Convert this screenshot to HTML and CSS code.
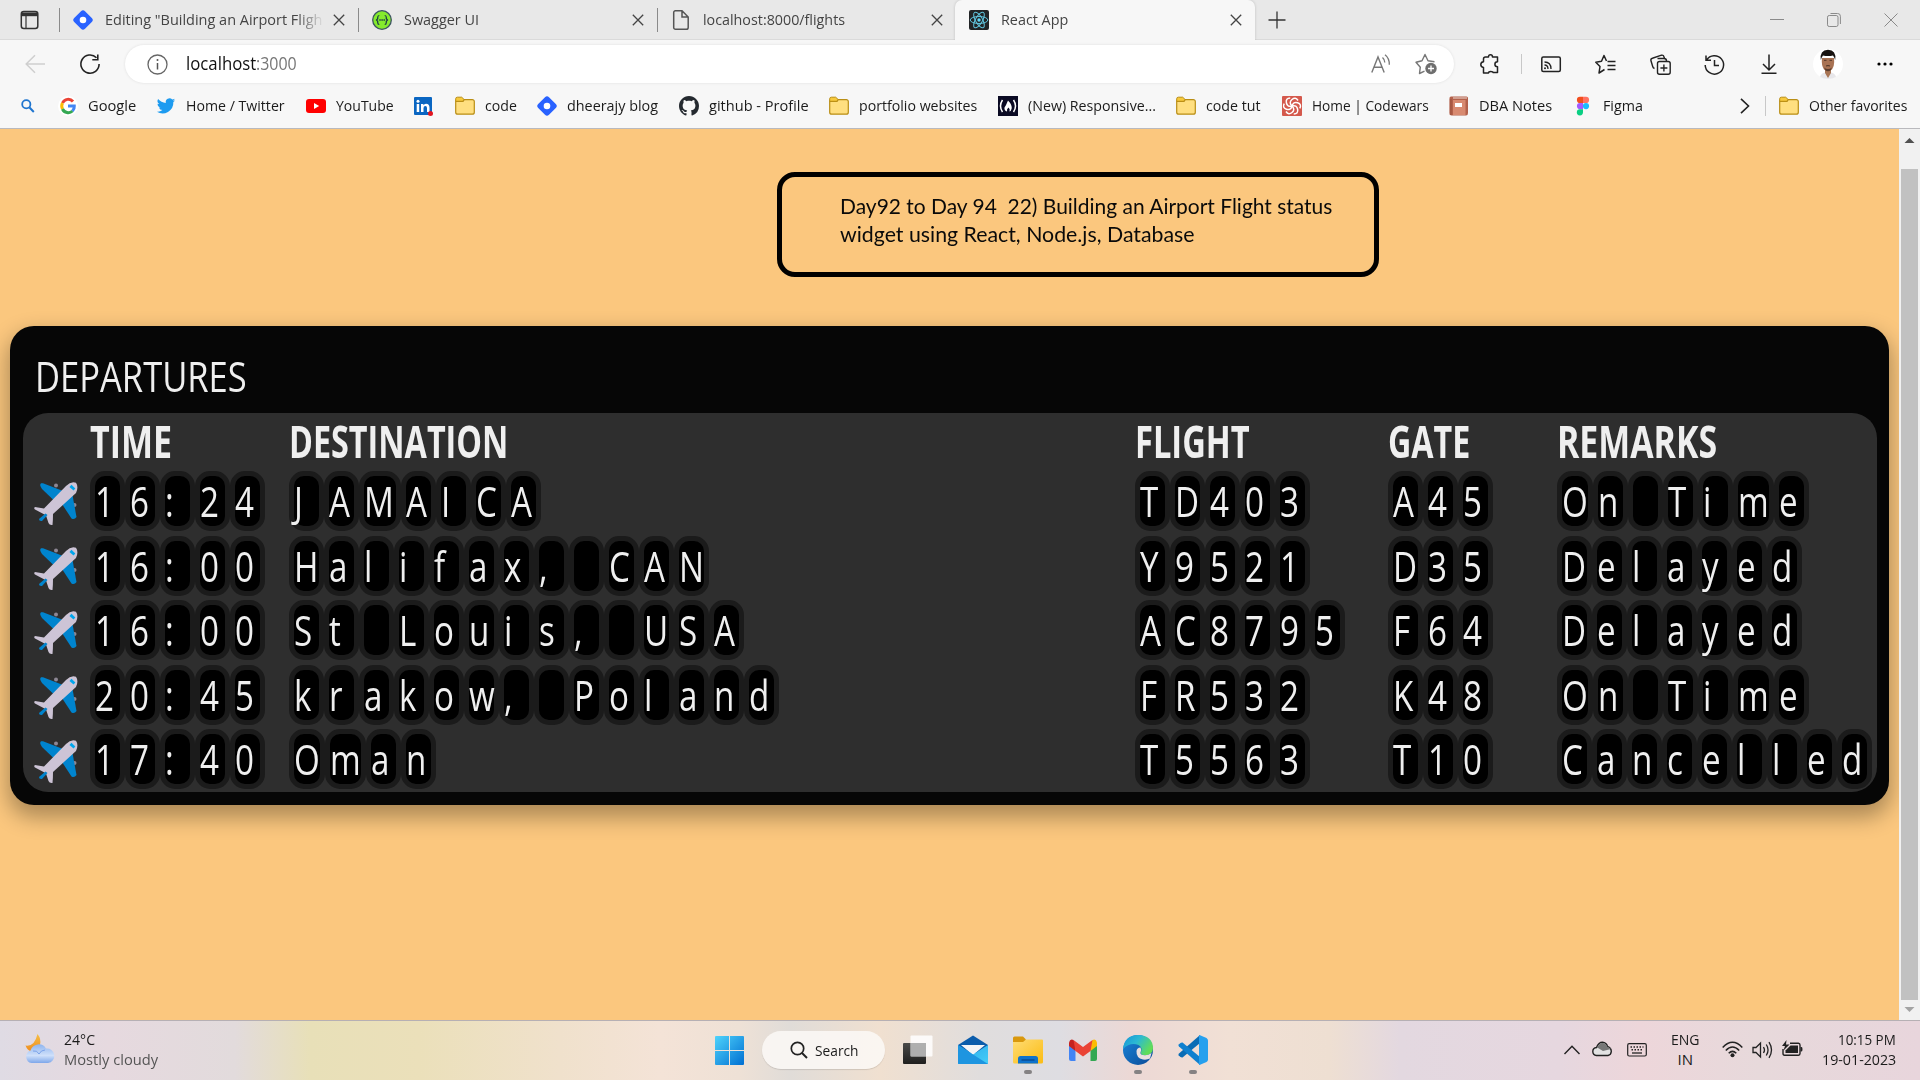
FILE: index.html
```html
<!DOCTYPE html>
<html lang="en">
<head>
<meta charset="utf-8">
<title>React App</title>
<link rel="stylesheet" href="styles.css">
</head>
<body>
<svg width="0" height="0" class="defs">
  <defs>
    <linearGradient id="gWin" x1="0" y1="0" x2="1" y2="1"><stop offset="0" stop-color="#4fd3fb"/><stop offset="1" stop-color="#006fd2"/></linearGradient>
    <linearGradient id="gFold" x1="0" y1="0" x2="1" y2="1"><stop offset="0" stop-color="#ffdc74"/><stop offset="1" stop-color="#fbbc13"/></linearGradient>
    <linearGradient id="gMail" x1="0" y1="0" x2="1" y2="1"><stop offset="0" stop-color="#2ba9ea"/><stop offset="1" stop-color="#45cdf8"/></linearGradient>
    <linearGradient id="gEdge" x1="0" y1="0" x2="1" y2="0.5"><stop offset="0" stop-color="#1593d8"/><stop offset=".5" stop-color="#2cb9d3"/><stop offset="1" stop-color="#62dd58"/></linearGradient>
    <linearGradient id="gEdge2" x1="0" y1="0" x2="1" y2="1"><stop offset="0" stop-color="#1a86dc"/><stop offset="1" stop-color="#0c4a96"/></linearGradient>
    <linearGradient id="gMoon" x1="0" y1="0" x2="0" y2="1"><stop offset="0" stop-color="#f5bf45"/><stop offset="1" stop-color="#ee8a1e"/></linearGradient>
    <linearGradient id="gCloud" x1="0" y1="0" x2="0" y2="1"><stop offset="0" stop-color="#8fb5ee"/><stop offset=".6" stop-color="#cfe0fa"/><stop offset="1" stop-color="#7ea7ea"/></linearGradient>
    <linearGradient id="gDark" x1="0" y1="0" x2="0" y2="1"><stop offset="0" stop-color="#4a4a48"/><stop offset="1" stop-color="#1f1f1e"/></linearGradient>
    <symbol id="folder" viewBox="0 0 20 20"><path d="M.7 4.5V16.2a2 2 0 0 0 2 2H17.3a2 2 0 0 0 2-2V5.6a2 2 0 0 0-2-2H9.3L8 5.3H.7Z" fill="#ffdf80" stroke="#b98e15" stroke-width="1.2"/><path d="M.7 5.3V2.8A1.6 1.6 0 0 1 2.3 1.2H6.7L9 3.4 7.8 5.3Z" fill="#f7c93c" stroke="#b98e15" stroke-width="1"/></symbol>
    <symbol id="diamond" viewBox="0 0 20 20"><path d="M8 1.2Q10-.8 12 1.2L18.8 8Q20.800 10 18.8 12L12 18.800Q10 20.800 8 18.800L1.2 12Q-.8 10 1.2 8Z" fill="#2962ff"/><circle cx="10" cy="10" r="3.3" fill="#fff"/></symbol>
    <symbol id="x" viewBox="0 0 12 12"><path d="M.8.8 11.2 11.2M11.200.8.8 11.2" stroke="#444" stroke-width="1.3" fill="none"/></symbol>
    <symbol id="plane" viewBox="0 0 44 44"><circle cx="22" cy="3.500" r="2" fill="#8d8794"/><circle cx="40.500" cy="23" r="2" fill="#8d8794"/><path d="M7 1.300 9 1.200 29 9 20 18.500 8 7Q5 3 7 1.300Z" fill="#0084ce"/><path d="M38.500 13 42.500 35Q40.500 38 37.500 36.500L28 22Z" fill="#0084ce"/><path d="M32 4Q37-1 42 .8 44.800 5 42 11L19 32Q19 38 18.500 43 15.500 43.500 14.500 41L12 33.500 9.500 32 1 27.500Q-.5 26 1 25L10 26.500Z" fill="#cdc4d6"/><path d="M35.500 5 37.500 2.800 41.300 6.500 39.500 8.500Z" fill="#00a6ed"/><path d="M11.500 31.500 13.500 33 8 39Q5 39.500 5 37Z" fill="#0084ce"/></symbol>
  </defs>
</svg>

<header class="browser">
  <div class="tabs">
    <svg class="tabmenu" viewBox="0 0 20 20" width="20" height="20"><rect x="1.300" y="1.500" width="16.500" height="17" rx="2.500" fill="none" stroke="#333" stroke-width="1.500"/><path d="M1 2.500h17v3.700H1z" fill="#333"/><path d="M6 6v12" stroke="#333" stroke-width="1.200"/></svg>
    <div class="tab"><svg width="20" height="20"><use href="#diamond"/></svg><span class="txt fade" data-w="217">Editing "Building an Airport Fligh</span><svg class="close" width="12" height="12"><use href="#x"/></svg></div>
    <div class="tab"><svg width="20" height="20" viewBox="0 0 20 20"><circle cx="10" cy="10" r="9.300" fill="#85ea2d" stroke="#3c5361" stroke-width="1.300"/><path d="M7.300 5.500q-1.600 0-1.600 2v1.200L4.500 10l1.200 1.300v1.200q0 2 1.600 2M12.700 5.500q1.600 0 1.600 2v1.200l1.200 1.300-1.200 1.300v1.200q0 2-1.600 2" fill="none" stroke="#173647" stroke-width="1.200"/><path d="M7.300 10h5.600" stroke="#173647" stroke-width="1.400" stroke-dasharray="1.400 .7"/></svg><span class="txt" data-w="75">Swagger UI</span><svg class="close" width="12" height="12"><use href="#x"/></svg></div>
    <div class="tab"><svg width="20" height="20" viewBox="0 0 20 20"><path d="M3.800.8H11L17.200 7V17.500a1.800 1.800 0 0 1-1.800 1.800H4.500a1.800 1.800 0 0 1-1.800-1.800V2.500A1.700 1.700 0 0 1 4.500.8ZM11 1v6h6" fill="none" stroke="#555" stroke-width="1.500"/></svg><span class="txt" data-w="142">localhost:8000/flights</span><svg class="close" width="12" height="12"><use href="#x"/></svg></div>
    <div class="tab active"><svg width="20" height="20" viewBox="0 0 20 20"><rect width="20" height="20" rx="2" fill="#222426"/><g fill="none" stroke="#61c5de" stroke-width="1"><ellipse cx="10" cy="10" rx="8.800" ry="3.500"/><ellipse cx="10" cy="10" rx="8.800" ry="3.500" transform="rotate(60 10 10)"/><ellipse cx="10" cy="10" rx="8.800" ry="3.500" transform="rotate(120 10 10)"/></g><circle cx="10" cy="10" r="1.700" fill="#61dafb"/></svg><span class="txt" data-w="67">React App</span><svg class="close" width="12" height="12"><use href="#x"/></svg></div>
    <svg class="plus" width="18" height="18" viewBox="0 0 18 18"><path d="M9 .5v17M.5 9h17" stroke="#333" stroke-width="1.300"/></svg>
    <div class="winctl">
      <svg width="14" height="14" viewBox="0 0 14 14"><path d="M0 6.500h14" stroke="#8a8a8a"/></svg>
      <svg width="14" height="14" viewBox="0 0 14 14"><path d="M.5 4.200A1.700 1.700 0 0 1 2.200 2.500H9.300A1.700 1.700 0 0 1 11 4.200v7.600A1.700 1.700 0 0 1 9.300 13.500H2.200A1.700 1.700 0 0 1 .5 11.800ZM3.500.5h7A2.800 2.800 0 0 1 13.400 3.300V11" fill="none" stroke="#8a8a8a"/></svg>
      <svg width="14" height="14" viewBox="0 0 14 14"><path d="M.5.500l13 13M13.500.500l-13 13" stroke="#8a8a8a"/></svg>
    </div>
  </div>

  <div class="toolbar">
    <svg class="back" width="20" height="20" viewBox="0 0 20 20"><path d="M20 10H1.200M10 1.200 1.200 10l8.800 8.800" fill="none" stroke="#cfcfcf" stroke-width="1.500"/></svg>
    <svg class="reload" width="20" height="20" viewBox="0 0 20 20"><path d="M16.500 3.700A9.100 9.100 0 1 0 19.100 10M17.800.5v5.300h-5.500" fill="none" stroke="#222" stroke-width="1.600"/></svg>
    <div class="address">
      <svg width="21" height="21" viewBox="0 0 21 21"><circle cx="10.500" cy="10.500" r="9.500" fill="none" stroke="#666" stroke-width="1.300"/><path d="M10.500 9v6.500" stroke="#555" stroke-width="1.500"/><circle cx="10.500" cy="6" r="1" fill="#555"/></svg>
      <span class="url" data-w="70">localhost</span><span class="port" data-w="41">:3000</span>
      <svg class="read" width="20" height="20" viewBox="0 0 20 20"><path d="M.8 18.500 7 3l6.200 15.500M3 13.200h8" fill="none" stroke="#777" stroke-width="1.400"/><path d="M11.500 3.500q2.300 2 2.300 5M14 .8q4.500 3.500 4.300 10" fill="none" stroke="#777" stroke-width="1.300"/></svg>
      <svg class="addfav" width="22" height="22" viewBox="0 0 22 22"><path d="M9.500 18.200 4.500 20.500l.8-6.300L1 9.200l6-1.400L10 1.500l3 6.300 6.500 1" fill="none" stroke="#777" stroke-width="1.400" stroke-linejoin="round"/><circle cx="16" cy="15.500" r="5.700" fill="#6e6e6e"/><path d="M16 12.500v6M13 15.500h6" stroke="#fff" stroke-width="1.300"/></svg>
    </div>
    <div class="actions">
      <svg class="ext" width="20" height="20" viewBox="0 0 20 20"><path d="M5.500 3h3q0-2.200 2-2.200T12.500 3h5v4.700q-2.600 0-2.600 2.500t2.600 2.500V18.500H13q0-1-2.200-1T8.500 19H3.500V13.500Q.8 13 .8 10.500T3.500 7.700V5Q3.500 3 5.500 3Z" fill="none" stroke="#222" stroke-width="1.500" stroke-linejoin="round"/></svg>
      <i class="sep"></i>
      <svg width="20" height="20" viewBox="0 0 20 20"><rect x=".8" y="3" width="18.500" height="14.500" rx="1.500" fill="none" stroke="#222" stroke-width="1.500"/><path d="M3.500 8q6.500 0 6.500 7M3.500 11q3.500 0 3.500 4" fill="none" stroke="#222" stroke-width="1.300"/><circle cx="4" cy="14.300" r="1" fill="#222"/></svg>
      <svg width="21" height="21" viewBox="0 0 21 21"><path d="M11.500 7 9 1.500 6.500 7.300.8 8.200 5 12.500 4 19 9.500 15.500" fill="none" stroke="#222" stroke-width="1.500" stroke-linejoin="round"/><path d="M12.500 7.500H20.500M12.500 11.500H20.500M12.500 15.500H20.500" stroke="#222" stroke-width="1.400"/></svg>
      <svg width="21" height="21" viewBox="0 0 21 21"><rect x="7.500" y="7.500" width="12.700" height="12.700" rx="2" fill="none" stroke="#222" stroke-width="1.400"/><path d="M13.900 10.500v7M10.400 14h7M4.500 14.500Q3 14 2.700 12.500L.9 6.500Q.6 4.600 2.400 4.200L11.500 1.200Q13.500.9 14 2.800L14.600 4.800M7.500 4.500H14Q16.500 4.500 16.500 7" fill="none" stroke="#222" stroke-width="1.400"/></svg>
      <svg width="21" height="21" viewBox="0 0 21 21"><path d="M2.600 6A9.200 9.200 0 1 1 1.200 11M2 1.500V6.300H7M10.500 6v5.500h4.500" fill="none" stroke="#222" stroke-width="1.500"/></svg>
      <svg width="20" height="20" viewBox="0 0 20 20"><path d="M10 .5v15M4 10l6 6 6-6M2.500 19.200h15" fill="none" stroke="#222" stroke-width="1.500"/></svg>
      <svg class="avatar" width="30" height="30" viewBox="0 0 30 30"><circle cx="15" cy="15" r="15" fill="#fff"/><path d="M7 28Q8 24 12 23.500h6q4 .5 5 4.500-4 2-8 2t-8-2Z" fill="#e8e7ea"/><path d="M12 19h6v5l-3 5-3-5Z" fill="#a87554"/><path d="M9 9h12q.8 7.500-2 11.500-4 3.500-8 0-2.800-4-2-11.500Z" fill="#a87253"/><path d="M7.800 11Q6.500 1 15 .8 23.500 1 22.200 11q-.8-3-2.200-4.500-5 1-10 0Q8.600 8 7.800 11Z" fill="#171310"/><path d="M11 11.300h2.500M16.500 11.300H19M13 17q2-.7 4 0" stroke="#3b261c" stroke-width=".8"/><path d="M11 18.500q4 3 8 0l-1.500 3q-2.500 1.500-5 0Z" fill="#5b3d2e"/></svg>
      <svg width="18" height="18" viewBox="0 0 18 18"><circle cx="3" cy="9" r="1.600"/><circle cx="9" cy="9" r="1.600"/><circle cx="15" cy="9" r="1.600"/></svg>
    </div>
  </div>

  <div class="bookmarks">
    <svg width="14" height="14" viewBox="0 0 14 14"><circle cx="5.300" cy="5.300" r="4.100" fill="none" stroke="#1f75cf" stroke-width="1.800"/><path d="m8.500 8.500 4.300 4.500" stroke="#1f75cf" stroke-width="2"/></svg>
    <a class="g"><svg width="20" height="20" viewBox="0 0 20 20"><circle cx="10" cy="10" r="10" fill="#fff"/><g fill="none" stroke-width="3"><path d="M15 5.500A6.300 6.300 0 0 0 4.500 7" stroke="#ea4335"/><path d="M4.500 7a6.500 6.500 0 0 0 0 6" stroke="#fbbc05"/><path d="M4.500 13A6.300 6.300 0 0 0 14.500 15" stroke="#34a853"/><path d="M14.500 15Q16.500 13 16.300 10H10" stroke="#4285f4"/></g></svg><span data-w="48">Google</span></a>
    <a><svg width="20" height="20" viewBox="0 0 24 24"><path fill="#1d9bf0" d="M23 5a9 9 0 0 1-2.600.7 4.500 4.500 0 0 0 2-2.500 9 9 0 0 1-2.900 1.100A4.500 4.500 0 0 0 11.800 8.400 12.900 12.900 0 0 1 2.500 3.700 4.500 4.500 0 0 0 3.900 9.700 4.500 4.500 0 0 1 1.900 9.200a4.500 4.500 0 0 0 3.600 4.500 4.600 4.600 0 0 1-2 .1 4.500 4.500 0 0 0 4.200 3.100A9.100 9.100 0 0 1 1 18.800 12.900 12.900 0 0 0 20.800 7.300 9 9 0 0 0 23 5Z"/></svg><span data-w="99">Home / Twitter</span></a>
    <a><svg width="20" height="20" viewBox="0 0 20 20"><rect y="3" width="20" height="14" rx="3" fill="#f00"/><path d="M8 7v6l5.200-3Z" fill="#fff"/></svg><span data-w="58">YouTube</span></a>
    <a><svg width="20" height="20" viewBox="0 0 20 20"><rect y="1" width="18" height="18" rx="1" fill="#0a66c2"/><path d="M2.700 8h2.500v8H2.700zM7 8h2.400v1.200Q10.300 7.700 12 7.700q3.500 0 3.500 4V16H13v-4q0-2-1.600-2-1.900 0-1.900 2.200V16H7z" fill="#fff"/><circle cx="4" cy="5.200" r="1.500" fill="#fff"/><circle cx="16.500" cy="17.500" r="2.500" fill="#e01520"/></svg></a>
    <a><svg width="20" height="20"><use href="#folder"/></svg><span data-w="32">code</span></a>
    <a><svg width="20" height="20"><use href="#diamond"/></svg><span data-w="91">dheerajy blog</span></a>
    <a><svg width="20" height="20" viewBox="0 0 16 16"><path fill="#24292f" d="M8 0C3.580 0 0 3.580 0 8c0 3.540 2.290 6.530 5.470 7.590.4.070.55-.17.55-.38 0-.19-.01-.82-.01-1.490-2.010.37-2.530-.49-2.690-.94-.09-.23-.48-.94-.82-1.130-.28-.15-.68-.52-.01-.53.63-.01 1.080.58 1.230.82.72 1.210 1.870.87 2.330.66.07-.52.28-.87.51-1.070-1.780-.2-3.640-.89-3.640-3.950 0-.87.31-1.590.82-2.150-.08-.2-.36-1.020.08-2.120 0 0 .67-.21 2.200.82.64-.18 1.320-.27 2-.27s1.360.09 2 .27c1.530-1.040 2.200-.82 2.200-.82.44 1.100.16 1.920.08 2.120.51.56.82 1.270.82 2.150 0 3.070-1.870 3.750-3.650 3.950.29.25.54.73.54 1.480 0 1.070-.01 1.930-.01 2.200 0 .21.15.46.55.38A8.010 8.010 0 0 0 16 8c0-4.420-3.580-8-8-8Z"/></svg><span data-w="100">github - Profile</span></a>
    <a><svg width="20" height="20"><use href="#folder"/></svg><span data-w="118">portfolio websites</span></a>
    <a><svg width="20" height="20" viewBox="0 0 20 20"><rect width="20" height="20" fill="#0a0a23"/><path d="M4.500 4q-4 6 0 12M15.500 4q4 6 0 12" fill="none" stroke="#fff" stroke-width="1.500"/><path d="M10 4.500q4 4 3.700 8-.5 2.500-2.200 3 .8-2.500-1-4-2 1.300-1.500 4-3-1-2.500-4Q8 9.500 10 4.500Z" fill="#fff"/></svg><span data-w="128">(New) Responsive...</span></a>
    <a><svg width="20" height="20"><use href="#folder"/></svg><span data-w="55">code tut</span></a>
    <a><svg width="20" height="20" viewBox="0 0 20 20"><rect width="20" height="20" rx="1" fill="#d4594c"/><g fill="none" stroke="#fff" stroke-width="1.500"><path id="sw" d="M10 10Q6.500 6.500 10 3.500T16 4.500"/><use href="#sw" transform="rotate(60 10 10)"/><use href="#sw" transform="rotate(120 10 10)"/><use href="#sw" transform="rotate(180 10 10)"/><use href="#sw" transform="rotate(240 10 10)"/><use href="#sw" transform="rotate(300 10 10)"/></g></svg><span data-w="117">Home | Codewars</span></a>
    <a><svg width="20" height="20" viewBox="0 0 20 20"><path d="M2 .5H17.500Q19 .5 19 2V17Q19 19.500 17 19.500H2.500Q.5 19.500.5 17V2Q.5.500 2 .5Z" fill="#b3614b"/><path d="M4 2.500H18v-1H4Z" fill="#efdcd4"/><path d="M4 4H16.500V19H4Z" fill="#d88a70"/><rect x="6" y="7" width="7" height="4" fill="#fff"/><path d="M.8 3h2v16h-2z" fill="#a65843"/></svg><span data-w="73">DBA Notes</span></a>
    <a><svg width="20" height="20" viewBox="0 0 20 20"><path d="M10 .8H7a3.100 3.100 0 0 0 0 6.200h3Z" fill="#f24e1e"/><path d="M10 .8h3a3.100 3.100 0 0 1 0 6.200h-3Z" fill="#ff7262"/><path d="M10 7H7a3.100 3.100 0 0 0 0 6.200h3Z" fill="#a259ff"/><circle cx="13" cy="10.100" r="3.100" fill="#1abcfe"/><path d="M7 13.200h3v3.100A3.100 3.100 0 1 1 7 13.200Z" fill="#0acf83"/></svg><span data-w="40">Figma</span></a>
    <div class="more">
      <svg width="10" height="16" viewBox="0 0 10 16"><path d="m1 .8 7.500 7.200L1 15.200" fill="none" stroke="#222" stroke-width="1.600"/></svg>
      <i class="sep"></i>
      <a><svg width="20" height="20"><use href="#folder"/></svg><span data-w="98">Other favorites</span></a>
    </div>
  </div>
</header>

<div class="viewport">
  <main class="page">
    <div class="caption">
      <div><span data-w="492">Day92 to Day 94&nbsp; 22) Building an Airport Flight status</span></div>
      <div><span data-w="355">widget using React, Node.js, Database</span></div>
    </div>
    <section class="board">
      <h1><span data-w="212">DEPARTURES</span></h1>
      <div class="panel">
        <div class="row head">
          <b></b><b><span data-w="82">TIME</span></b><b><span data-w="219">DESTINATION</span></b><b><span data-w="115">FLIGHT</span></b><b><span data-w="82">GATE</span></b><b><span data-w="160">REMARKS</span></b>
        </div>
        <div id="rows"></div>
      </div>
    </section>
  </main>
  <div class="scroll"><svg width="21" height="24" viewBox="0 0 21 24"><path d="M5.500 14 10.500 9l5 5Z" fill="#505050"/></svg><div class="thumb"></div><svg width="21" height="20" viewBox="0 0 21 20"><path d="M5.500 7 10.500 12l5-5Z" fill="#a3a3a3"/></svg></div>
</div>

<footer class="taskbar">
  <div class="weather">
    <svg width="32" height="32" viewBox="0 0 32 32"><path d="M13.500 1Q17.500 6 16 12L8 19Q3 17 1.500 12.500 10.500 14 13.500 1Z" fill="url(#gMoon)"/><path d="M7.500 30A6.500 6.500 0 0 1 6.500 17.500 8.500 8.500 0 0 1 22 15.500 7.300 7.300 0 1 1 24 30Z" fill="url(#gCloud)"/><path d="M9 18q4-1 6 3 2-4 6-4" stroke="#7ba3ea" fill="none"/></svg>
    <div><div class="temp"><span data-w="31">24°C</span></div><div class="cond"><span data-w="94">Mostly cloudy</span></div></div>
  </div>
  <div class="apps">
    <svg class="start" width="29" height="29" viewBox="0 0 29 29"><path d="M1 0h13v14H0V1Q0 0 1 0ZM15 0h13q1 0 1 1v13H15ZM0 15h14v14H1q-1 0-1-1ZM15 15h14v13q0 1-1 1H15Z" fill="url(#gWin)"/></svg>
    <div class="search"><svg width="18" height="18" viewBox="0 0 18 18"><circle cx="7.500" cy="7.500" r="6.200" fill="none" stroke="#222" stroke-width="1.700"/><path d="m12 12 5 5" stroke="#222" stroke-width="2"/></svg><span data-w="44">Search</span></div>
    <div class="app"><svg width="30" height="30" viewBox="0 0 30 30"><rect x="0" y="8" width="23" height="21" rx="1" fill="url(#gDark)"/><rect x="7.500" y=".5" width="22" height="21" rx="1" fill="#fff" fill-opacity=".85"/><path d="M7.500 8H23V21.500H7.500Z" fill="#999" fill-opacity=".7"/></svg></div>
    <div class="app"><svg width="30" height="30" viewBox="0 0 30 30"><path d="M0 10 15 .5 30 10v8H0Z" fill="#0b5cab"/><path d="M3 10H27L15 20Z" fill="#f4f4f6"/><path d="M0 10 15 19.500 30 10V29H0Z" fill="url(#gMail)"/><path d="M0 10 30 29H1q-1 0-1-1Z" fill="#1e95e0"/></svg></div>
    <div class="app run"><svg width="30" height="30" viewBox="0 0 30 30"><path d="M0 3Q0 1.500 1.500 1.500H10L13 4.500V9H0Z" fill="#d9980d"/><path d="M0 7H10L13 4.500H29Q30 4.500 30 5.500V27Q30 28.500 28.500 28.500H1.500Q0 28.500 0 27Z" fill="url(#gFold)"/><path d="M5 28.500V23.500Q5 21 7.500 21H22.500Q25 21 25 23.500V28.500Z" fill="#0f73cc"/><path d="M8.500 25h13" stroke="#0a4d94" stroke-width="1.500"/></svg></div>
    <div class="app"><svg width="28" height="22" viewBox="0 0 28 22"><path d="M0 4v16q0 2 2 2h4.500V9Z" fill="#4285f4"/><path d="M28 4v16q0 2-2 2h-4.500V9Z" fill="#34a853"/><path d="M0 3.500V7L6.500 12V4.500L4.500 1Q1-.5 0 3.500Z" fill="#c5221f"/><path d="M28 3.500V7l-6.500 5V4.500L23.500 1Q27-.5 28 3.500Z" fill="#fbbc04"/><path d="M4.500.900 14 8 23.500.9 21.500 12 14 17.500 6.500 12Z" fill="#ea4335"/></svg></div>
    <div class="app run"><svg width="30" height="30" viewBox="0 0 30 30"><circle cx="15" cy="15" r="15" fill="url(#gEdge2)"/><path d="M0 14Q1.500 0 15 0 29.500.5 30 13 30 20 22 20.300 17 20 18 17 20 13 15.500 10 7 7 0 14Z" fill="url(#gEdge)"/><path d="M17.500 17.500Q17 20.300 22 20.300 25.500 20.300 28.500 18L27 23.500Q24 25 20 24.500 13 23 13.500 16 14 12.500 17.500 12.500 19 15 17.500 17.500Z" fill="#eadfdf"/></svg></div>
    <div class="app run"><svg width="30" height="30" viewBox="0 0 30 30"><path d="M22 0V8L4.500 22.500Q3 23 .7 20.500 0 19.500 1 18.500Z" fill="#0a6cb5"/><path d="M22 30V22L4.500 7.500Q3 7 .7 9.500 0 10.500 1 11.500Z" fill="#0f80cf"/><path d="M21.500 0 28.500 3Q30 4 30 5.500V24.500Q30 26 28.500 27L21.500 30Q21 30 21 29V1Q21 0 21.500 0Z" fill="#26a0ee"/></svg></div>
  </div>
  <div class="tray">
    <svg class="up" width="16" height="10" viewBox="0 0 16 10"><path d="M.5 9 8 1.200 15.500 9" fill="none" stroke="#222" stroke-width="1.400"/></svg>
    <svg class="cloud" width="20" height="16" viewBox="0 0 20 16"><path d="M4.500 14.500Q.8 14 .8 10.500.8 7 4.500 6.500 6.500 1.200 10.500 1.200 14.500 1.500 15.500 5.500 19.300 7 19.300 10.500 19 14 16 14.500Z" fill="#e2e2e2" stroke="#222" stroke-width="1.400"/><path d="M2 8Q4 6.500 6 7L11 10 19 8Q17 6 15 5.500 14 2 10.500 2 7 2 5 7Z" fill="#777"/></svg>
    <svg class="kbd" width="20" height="14" viewBox="0 0 20 14"><rect x=".7" y=".7" width="18.600" height="12.300" rx="1.500" fill="none" stroke="#222" stroke-width="1.200"/><path d="M3.500 4h13M4.500 6.800h11" stroke="#222" stroke-width="1.500" stroke-dasharray="1.500 1.500"/><path d="M5 10h10" stroke="#222" stroke-width="1.300"/></svg>
    <div class="lang"><div><span data-w="29">ENG</span></div><div><span data-w="15">IN</span></div></div>
    <svg class="wifi" width="21" height="17" viewBox="0 0 21 17"><g fill="none" stroke="#222" stroke-width="1.500"><path d="M.7 6.500Q10.500-4 20.300 6.500M3.800 9.500Q10.500 2.500 17.200 9.500M6.700 12.300Q10.500 8.500 14.300 12.300"/></g><circle cx="10.500" cy="14.300" r="2" fill="#222"/></svg>
    <svg class="vol" width="21" height="18" viewBox="0 0 21 18"><path d="M1 6.500h3L8.500 2v14L4 11.500H1ZM11.500 6q2 3 0 6M14.300 3.500q3.500 5.500 0 11M17 1.200q5 7.800 0 15.600" fill="none" stroke="#222" stroke-width="1.300"/></svg>
    <svg class="bat" width="21" height="17" viewBox="0 0 21 17"><path d="M8 3.200H16.500Q18 3.200 18 5V13.500Q18 15.200 16.500 15.200H2.500Q1 15.200 1 13.500V9" fill="none" stroke="#222" stroke-width="1.400"/><path d="M8.500 5.500H16V13H3.500V10.500Z" fill="#222"/><path d="M18.500 7h1q1 0 1 2.200t-1 2.300h-1ZM4.500 0 0 6h3l-1.500 4.500L7.500 4.500H4Z" fill="#222"/></svg>
    <div class="clock"><div><span data-w="58">10:15 PM</span></div><div><span data-w="74">19-01-2023</span></div></div>
  </div>
</footer>
<script src="board.js"></script>
</body>
</html>
```
FILE: styles.css
```css
* { box-sizing: border-box; }
body { margin: 0; width: 1920px; height: 1080px; overflow: hidden; display: flex; flex-direction: column; font: 15px/20px "Open Sans", "Noto Sans", sans-serif; color: #1b1b1b; }
svg { display: block; flex: none; overflow: visible; }
.defs { position: absolute; }
[data-w] { display: inline-block; white-space: nowrap; flex: none; }
[data-w] > span { display: inline-block; transform-origin: 0 50%; }
.browser [data-w] { margin-top: -1px; margin-bottom: 1px; }
.sep { width: 1px; height: 20px; background: #c8c8c8; }

.browser { height: 129px; background: #f7f7f7; border-bottom: 1px solid #b9b9bd; flex: none; }
.tabs { height: 40px; background: #e8e8e8; display: flex; align-items: center; border-bottom: 1px solid #dadada; padding-left: 20px; color: #444; }
.tabmenu { margin-right: 19px; }
.tab { width: 299px; height: 24px; padding: 0 15px 0 13px; border-left: 1px solid #8a8a8a; display: flex; align-items: center; }
.tab .close { margin-left: auto; margin-right: -2px; }
.tab .txt { margin-left: 12px; }
.fade { -webkit-mask-image: linear-gradient(90deg, #000 88%, transparent 101%); mask-image: linear-gradient(90deg, #000 88%, transparent 101%); }
.tab.active { width: 300px; height: 40px; background: #f7f7f7; border: 0; border-radius: 7px 7px 0 0; margin-left: -1px; padding-left: 14px; box-shadow: 0 0 3px rgba(0, 0, 0, .18); clip-path: inset(-4px -4px 0 -4px); align-self: flex-start; }
.plus { margin-left: 13px; }
.winctl { margin-left: auto; display: flex; gap: 43px; padding-right: 22px; }

.toolbar { height: 48px; display: flex; align-items: center; padding: 0 26px 0 25px; }
.reload { margin-left: 35px; }
.address { margin-left: 25px; width: 1329px; height: 38px; border-radius: 19px; background: #fff; box-shadow: 0 0 3px rgba(0, 0, 0, .1); display: flex; align-items: center; padding: 0 17px 0 22px; font-size: 17.500px; }
.url { margin-left: 18px; color: #111; }
.port { color: #777; }
.read { margin-left: auto; margin-right: 24px; }
.actions { display: flex; align-items: center; flex: 1; justify-content: space-between; margin-left: 26px; }
.ext { margin-right: 2px; }
.actions .sep { margin: 0 -15px 0 -15px; }
.avatar { margin-right: -1px; }

.bookmarks { height: 36px; display: flex; align-items: center; padding: 0 13px 0 21px; gap: 20.500px; color: #1b1b1b; }
.bookmarks .g { margin-left: 2px; }
.bookmarks a { display: flex; align-items: center; gap: 10px; }
.more { margin-left: auto; display: flex; align-items: center; }
.more .sep { margin: 0 13px 0 15px; }

.viewport { flex: none; height: 891px; display: flex; }
.page { flex: 1; background: #fbc77e; padding: 43px 10px 0; }
.caption { width: 602px; height: 105px; margin-left: 767px; border: 5px solid #000; border-radius: 18px; padding: 15px 0 0 58px; font: 21px/28px Lato, sans-serif; color: #0a0a0a; }
.board { height: 479px; margin-top: 49px; padding: 0 12px 0 13px; background: #060606; border-radius: 24px; box-shadow: 0 10px 22px 2px rgba(0, 0, 0, .32); color: #efefef; font-size: 42.500px; }
.board h1 { margin: 0; height: 87px; padding: 22px 0 0 12px; font: inherit; line-height: 56px; }
.panel { height: 379px; background: #2e2e2e; border-radius: 25px; }
.row { display: grid; grid-template-columns: 67px 199px 846px 253px 169px 1fr; height: 60px; margin-bottom: 4.500px; }
.row.head { height: 58px; margin: 0; line-height: 57px; font-size: 44px; }
.head b { font-weight: 700; }
.plane { margin: 11px 0 0 11px; }
.word { display: flex; }
.tile { width: 35px; height: 60px; border: 5px solid #1b1b1b; border-radius: 15px; background: #000; line-height: 50px; white-space: nowrap; flex: none; font-weight: 500; }
.tile.o { width: 36px; }
.tile.m { width: 41px; }
.tile.M { width: 42px; }
.tile span { display: block; transform: scaleX(.78); transform-origin: 0 50%; }
.scroll { width: 21px; background: #f1f1f1; display: flex; flex-direction: column; }
.thumb { flex: 1; margin: 16px 2px 0; background: #c1c1c1; }

.taskbar { flex: none; height: 60px; border-top: 1px solid #b6b0b4; display: grid; grid-template-columns: 714px 1fr 358px; background: linear-gradient(90deg, #dfdbe4 0, #e6d9df 110px, #e2dbdc 235px, #e8e0b8 310px, #ebe0ba 420px, #f0e1cc 560px, #f4e3d7 660px, #eee1d6 740px, #e0dcd8 790px, #f0e0d0 880px, #e0dddd 980px, #dedde2 1060px, #ecd8d5 1130px, #f1e0d5 1230px, #eedfd2 1330px, #e3d8e0 1400px, #e6d7df 1560px, #edd6da 1640px, #e7d9db 1760px, #e8d5dc 1920px); }
.weather { display: flex; padding: 12px 0 0 24px; gap: 8px; }
.weather > div { margin-top: -4px; }
.cond { color: #555; }
.apps { display: flex; align-items: flex-start; }
.start { margin: 15px 18px 0 1px; }
.search { width: 123px; height: 38px; margin: 10px 5px 0 0; border-radius: 19px; background: rgba(251, 249, 247, .85); box-shadow: 0 1px 1px rgba(0, 0, 0, .12); display: flex; align-items: center; gap: 7px; padding-left: 28px; }
.app { width: 55px; height: 54px; padding-top: 14px; display: flex; flex-direction: column; align-items: center; }
.app > svg { height: 30px; }
.run::after { content: ""; width: 8px; height: 4px; border-radius: 2px; background: #858283; margin-top: 5px; }
.tray { display: flex; align-items: flex-start; padding-left: 2px; }
.up { margin-top: 24px; }
.cloud { margin: 20px 15px 0 12px; }
.kbd { margin-top: 22px; }
.lang { width: 42px; margin: 8px 16px 0 17px; text-align: center; }
.wifi { margin-top: 20px; }
.vol { margin: 20px 9px 0 9px; }
.bat { margin-top: 19px; }
.clock { flex: 1; text-align: right; padding: 8px 24px 0 0; }
.lang > div, .clock > div { height: 20px; }
```
FILE: board.js
```js
const flights = [
  ["16:24", "JAMAICA", "TD403", "A45", "On Time"],
  ["16:00", "Halifax, CAN", "Y9521", "D35", "Delayed"],
  ["16:00", "St Louis, USA", "AC8795", "F64", "Delayed"],
  ["20:45", "krakow, Poland", "FR532", "K48", "On Time"],
  ["17:40", "Oman", "T5563", "T10", "Cancelled"]
];
const wide = { O: " o", m: " m", M: " M" };
const tile = c => `<div class="tile${wide[c] || ""}"><span>${c}</span></div>`;
document.getElementById("rows").innerHTML = flights.map(f =>
  `<div class="row"><svg class="plane" width="44" height="44"><use href="#plane"/></svg>` +
  f.map(w => `<div class="word">${[...w].map(tile).join("")}</div>`).join("") + `</div>`
).join("");

document.querySelectorAll("[data-w]").forEach(el => {
  const inner = document.createElement("span");
  inner.append(...el.childNodes);
  el.append(inner);
  const w = +el.dataset.w;
  inner.style.transform = `scaleX(${w / inner.offsetWidth})`;
  el.style.width = w + "px";
});
```
